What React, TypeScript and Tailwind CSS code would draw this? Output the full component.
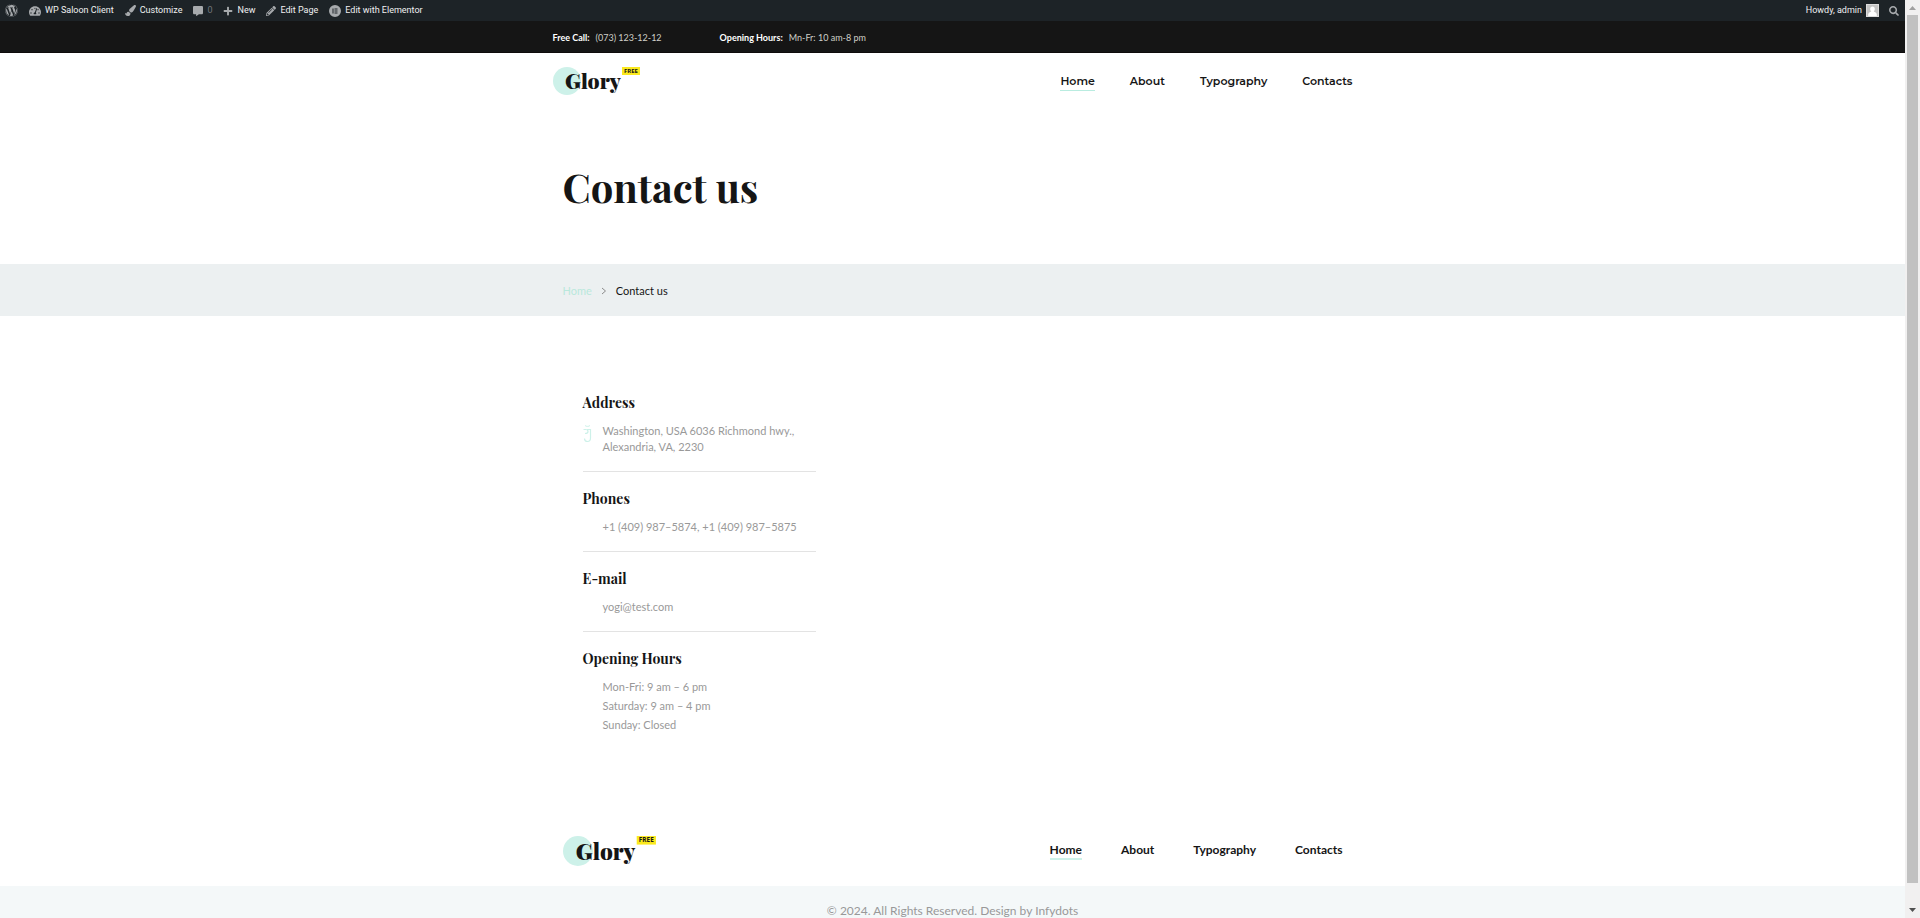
import type { ReactNode } from 'react';
import { clsx } from 'clsx';
import {
  FaCommentAlt,
  FaPaintBrush,
  FaPencilAlt,
  FaPlus,
  FaSearch,
  FaTachometerAlt,
  FaWordpress,
} from 'react-icons/fa';

const NAV_LINKS = ['Home', 'About', 'Typography', 'Contacts'];

const SERIF = "font-['Playfair_Display','Liberation_Serif',serif]";

// ─── Logo ─────────────────────────────────────────────────────────────────────

function Logo({ className }: { className: string }) {
  return (
    <a href="#home" aria-label="Glory" className="block">
      <svg viewBox="0 0 88 28" className={clsx('overflow-visible', className)}>
        <circle cx="14" cy="14" r="14" fill="#cdf1e9" />
        <text
          x="12"
          y="22"
          fontFamily="'Playfair Display', 'Liberation Serif', serif"
          fontWeight="900"
          fontSize="21"
          fill="#151515"
        >
          Glory
        </text>
        <rect x="69" y="0" width="18" height="8" fill="#fbe91d" />
        <text
          x="78"
          y="6"
          textAnchor="middle"
          fontFamily="'Open Sans', sans-serif"
          fontWeight="700"
          fontSize="6"
          fill="#151515"
        >
          FREE
        </text>
      </svg>
    </a>
  );
}

// ─── Admin bar ────────────────────────────────────────────────────────────────

function ElementorIcon() {
  return (
    <svg viewBox="0 0 24 24" className="h-3 w-3" fill="currentColor">
      <path
        fillRule="evenodd"
        d="M12 0a12 12 0 100 24 12 12 0 000-24zM7 7h2v10H7zM11 7h6v2h-6zM11 11h6v2h-6zM11 15h6v2h-6z"
      />
    </svg>
  );
}

function AdminItem({ icon, label, muted }: { icon: ReactNode; label: string; muted?: boolean }) {
  return (
    <a href="#admin" className="flex items-center gap-1 whitespace-nowrap">
      <span className="text-[#a7aaad]">{icon}</span>
      <span className={clsx(muted && 'text-[#72777c]')}>{label}</span>
    </a>
  );
}

function AdminBar() {
  return (
    <div className="flex h-[21px] shrink-0 items-center justify-between bg-[#1d2327] pr-1.5 pl-[5px] font-[Roboto,sans-serif] text-[9px] leading-none text-[#f0f0f1]">
      <div className="flex items-center gap-[11px]">
        <a href="#wordpress" aria-label="About WordPress" className="text-[#a7aaad]">
          <FaWordpress size={13} />
        </a>
        <AdminItem icon={<FaTachometerAlt size={12} />} label="WP Saloon Client" />
        <AdminItem icon={<FaPaintBrush size={11} />} label="Customize" />
        <AdminItem icon={<FaCommentAlt size={10} />} label="0" muted />
        <AdminItem icon={<FaPlus size={10} />} label="New" />
        <AdminItem icon={<FaPencilAlt size={10} />} label="Edit Page" />
        <AdminItem icon={<ElementorIcon />} label="Edit with Elementor" />
      </div>
      <div className="flex items-center gap-2.5">
        <a href="#profile" className="flex items-center gap-1">
          Howdy, admin
          <svg viewBox="0 0 13 13" className="h-[13px] w-[13px]">
            <rect width="13" height="13" fill="#dcdcdc" />
            <rect x="1" y="1" width="11" height="11" fill="#c4c4c4" />
            <path d="M6.5 2.5c-1.6 0-2.3 1.1-2.3 2.4 0 1 .5 1.9 1.1 2.4-.2.9-2.9 1-3.1 3V12h8.600v-1.700c-.2-2-2.900-2.100-3.100-3 .6-.5 1.100-1.400 1.100-2.400 0-1.300-.7-2.400-2.300-2.400z" fill="#fff" />
          </svg>
        </a>
        <button type="button" aria-label="Search" className="text-[#a7aaad]">
          <FaSearch size={10} />
        </button>
      </div>
    </div>
  );
}

// ─── Header ───────────────────────────────────────────────────────────────────

function TopBar() {
  return (
    <div className="border-b border-[#0e0b0c] bg-[#151515] text-[9px] leading-4">
      <div className="mx-auto flex w-full max-w-[800px] gap-[58px] pt-[9px] pb-1.5 text-[#d0d0c8]">
        <p>
          <strong className="mr-1.5 text-white">Free Call:</strong>
          (073) 123-12-12
        </p>
        <p>
          <strong className="mr-1.5 text-white">Opening Hours:</strong>
          Mn-Fr: 10 am-8 pm
        </p>
      </div>
    </div>
  );
}

function Header() {
  return (
    <header className="mx-auto flex w-full max-w-[800px] items-center justify-between py-3.5">
      <Logo className="h-7 w-[88px]" />
      <nav className="flex gap-[35px] font-[Montserrat,Inter,sans-serif] text-[11px] leading-4 font-semibold text-[#151515]">
        {NAV_LINKS.map((label, i) => (
          <a
            key={label}
            href={`#${label.toLowerCase()}`}
            className={clsx('border-b pt-0.5 pb-px', i === 0 ? 'border-[#b9ece0]' : 'border-transparent')}
          >
            {label}
          </a>
        ))}
      </nav>
    </header>
  );
}

function Breadcrumbs() {
  return (
    <nav aria-label="Breadcrumb" className="bg-[#ecf0f1]">
      <div className="mx-auto flex w-full max-w-[780px] items-center gap-[9px] pt-[19px] pb-[17px] text-[11px] leading-4">
        <a href="#home" className="text-[#b9e8dc]">Home</a>
        <svg viewBox="0 0 6 8" className="h-2 w-1.5" fill="none" stroke="#8c8c8c">
          <path d="M1 1l3.500 3L1 7" />
        </svg>
        <span className="text-[#151515]">Contact us</span>
      </div>
    </nav>
  );
}

// ─── Contact details ──────────────────────────────────────────────────────────

function ContactBlock({
  title,
  icon,
  last,
  children,
}: {
  title: string;
  icon?: ReactNode;
  last?: boolean;
  children: ReactNode;
}) {
  return (
    <section className={clsx('pt-[17px]', !last && 'border-b border-[#e3e3e3] pb-4')}>
      <h2 className={clsx('text-sm leading-5 font-bold text-[#151515]', SERIF)}>{title}</h2>
      <div className={clsx('flex', last ? 'mt-2 leading-[19px]' : 'mt-2.5 leading-4')}>
        <div className="w-5 shrink-0">{icon}</div>
        <div>{children}</div>
      </div>
    </section>
  );
}

function ContactDetails() {
  return (
    <div className="mx-auto w-full max-w-[740px] pt-[60px]">
      <div className="max-w-[233px] text-[11px] text-[#999]">
        <ContactBlock
          title="Address"
          icon={
            <svg viewBox="0 0 9 18" className="mt-0.5 h-[18px] w-[9px]" fill="none" stroke="#cdf1e9">
              <path d="M2 .5c1 1.200 4 1.200 5 0" />
              <path d="M.5 4.500h2C4 4.500 5 5 5 6.500S4 8.500 2 8.500M4 4.500h3.500V13c0 2-1 3.500-3 3.500s-3-1-3-3" strokeWidth="1.200" />
            </svg>
          }
        >
          Washington, USA 6036 Richmond hwy.,
          <br />
          Alexandria, VA, 2230
        </ContactBlock>
        <ContactBlock title="Phones">
          <a href="tel:+14099875874">+1 (409) 987–5874</a>, <a href="tel:+14099875875">+1 (409) 987–5875</a>
        </ContactBlock>
        <ContactBlock title="E-mail">
          <a href="mailto:yogi@test.com">yogi@test.com</a>
        </ContactBlock>
        <ContactBlock title="Opening Hours" last>
          <p>Mon-Fri: 9 am – 6 pm</p>
          <p>Saturday: 9 am – 4 pm</p>
          <p>Sunday: Closed</p>
        </ContactBlock>
      </div>
    </div>
  );
}

// ─── Footer ───────────────────────────────────────────────────────────────────

function Footer() {
  return (
    <footer className="pt-[102px]">
      <div className="mx-auto flex w-full max-w-[780px] items-center justify-between pb-5">
        <Logo className="h-[30px] w-[94px]" />
        <nav className="flex gap-[39px] text-xs leading-4 font-bold text-[#151515]">
          {NAV_LINKS.map((label, i) => (
            <a
              key={label}
              href={`#${label.toLowerCase()}`}
              className={clsx('border-b-2', i === 0 ? 'border-[#cdf1e9]' : 'border-transparent')}
            >
              {label}
            </a>
          ))}
        </nav>
      </div>
      <p className="bg-[#f4f8f9] py-[17px] text-center text-xs leading-4 text-[#999]">
        © 2024. All Rights Reserved. Design by Infydots
      </p>
    </footer>
  );
}

// ─── Scrollbar ────────────────────────────────────────────────────────────────

function Scrollbar() {
  return (
    <div aria-hidden="true" className="flex w-[15px] shrink-0 flex-col items-center bg-[#f1f0f0]">
      <svg viewBox="0 0 15 15" className="h-[15px] w-[15px]">
        <path d="M4 10h7L7.500 6z" fill="#a0a0a0" />
      </svg>
      <div className="w-[11px] flex-1 bg-[#c1c1c1]" />
      <svg viewBox="0 0 15 15" className="mt-5 h-[15px] w-[15px]">
        <path d="M4 5h7L7.500 9z" fill="#505050" />
      </svg>
    </div>
  );
}

export default function App() {
  return (
    <div className="flex h-screen overflow-hidden bg-white font-[Lato,sans-serif]">
      <div className="min-w-0 flex-1">
        <AdminBar />
        <TopBar />
        <Header />
        <main>
          <div className="mx-auto w-full max-w-[780px] pt-[54px] pb-[53px]">
            <h1 className={clsx('text-[40px] leading-[48px] font-bold text-[#151515]', SERIF)}>Contact us</h1>
          </div>
          <Breadcrumbs />
          <ContactDetails />
        </main>
        <Footer />
      </div>
      <Scrollbar />
    </div>
  );
}
